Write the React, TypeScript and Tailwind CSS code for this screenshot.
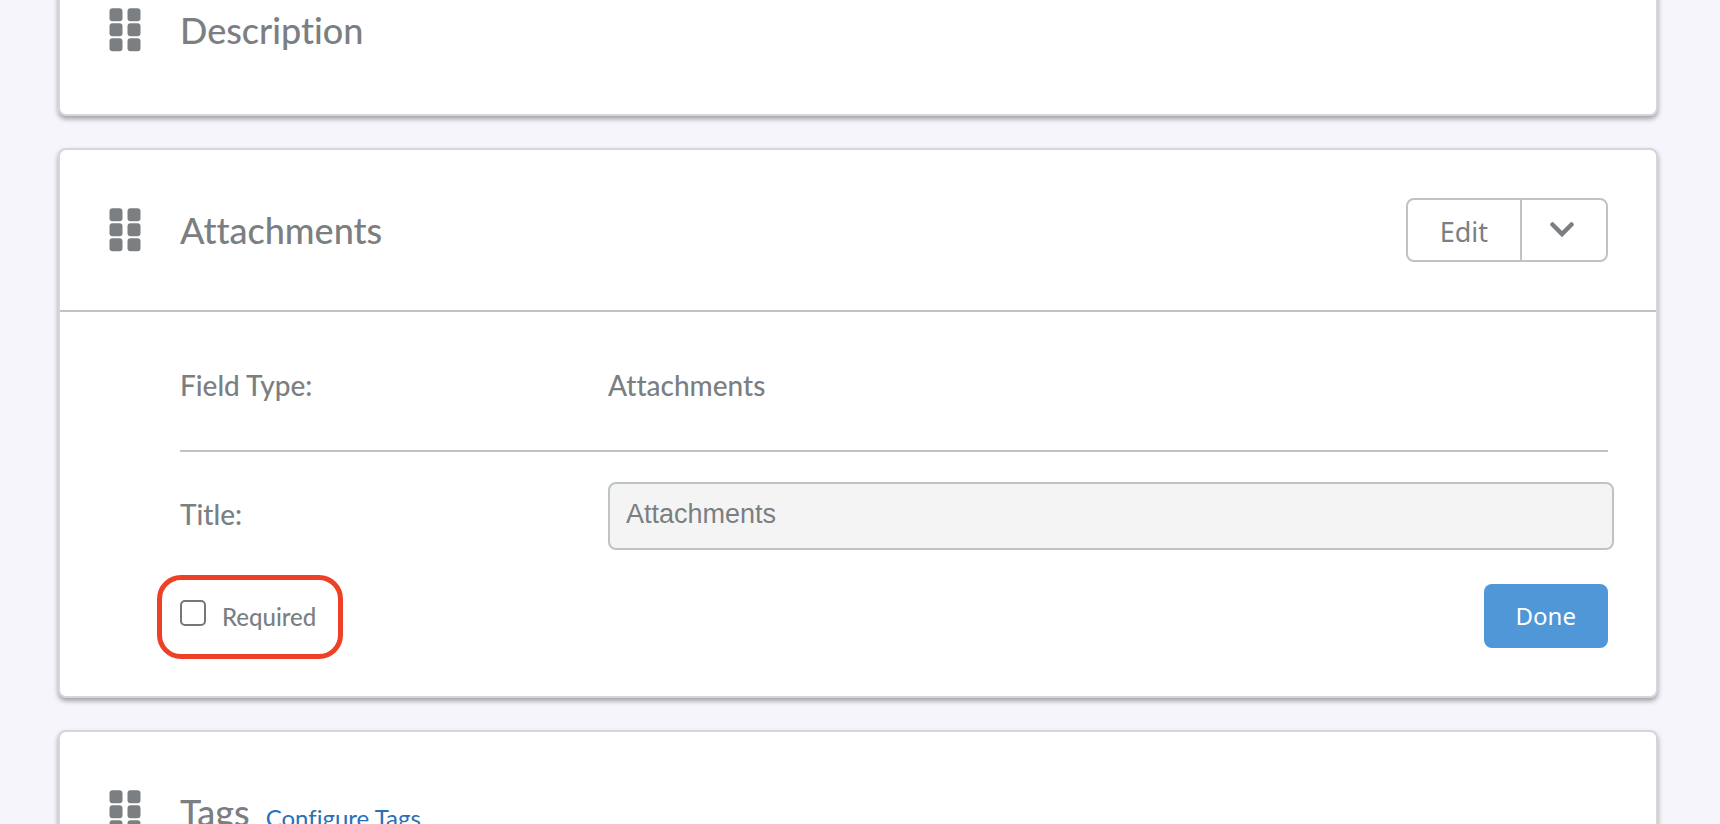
import React, { useState } from 'react';

interface FieldCardProps {
  title: string;
  link?: React.ReactNode;
  actions?: React.ReactNode;
  children?: React.ReactNode;
}

function DragHandle() {
  return (
    <svg viewBox="0 0 32 44" className="w-8 h-11 shrink-0 overflow-visible" fill="#7b7f82" aria-hidden="true">
      {[0, 15, 30].map((y) => (
        <React.Fragment key={y}>
          <rect x="1.5" y={y + 0.3} width="13" height="13" rx="3" />
          <rect x="19.5" y={y + 0.3} width="13" height="13" rx="3" />
        </React.Fragment>
      ))}
    </svg>
  );
}

function FieldCard({ title, link, actions, children }: FieldCardProps) {
  return (
    <section className="bg-white border-2 border-[#d3d7da] rounded-lg shadow-[0_3px_5px_rgba(0,0,0,0.35)]">
      <header className="flex items-center h-40 px-12">
        <DragHandle />
        <h2 className="ml-10 text-4xl font-medium">{title}</h2>
        {link}
        {actions && <div className="ml-auto">{actions}</div>}
      </header>
      {children}
    </section>
  );
}

function EditMenu() {
  return (
    <div className="flex h-16 border-2 border-[#bdc3c7] rounded-lg font-['Noto_Sans',sans-serif]">
      <button type="button" className="px-8 pt-1 text-[27px]">Edit</button>
      <button
        type="button"
        aria-label="More actions"
        className="flex items-center justify-center w-[86px] border-l-2 border-[#bdc3c7]"
      >
        <svg viewBox="0 0 24 16" className="w-6 h-4 mr-1" fill="none" stroke="#7b7f82" strokeWidth="4.5">
          <path d="M2.5 2.5L12 12L21.5 2.5" strokeLinecap="round" />
        </svg>
      </button>
    </div>
  );
}

export default function App() {
  const [title, setTitle] = useState('Attachments');
  const [required, setRequired] = useState(false);

  return (
    <div className="h-screen overflow-hidden bg-[#f6f5fb] text-[#7b7f82] font-[Lato,sans-serif] [font-variant-ligatures:none]">
      <main className="flex flex-col gap-8 -mt-[52px] pl-[58px] pr-[62px]">
        <FieldCard title="Description">
          <div className="h-1" />
        </FieldCard>

        <FieldCard title="Attachments" actions={<EditMenu />}>
          <div className="border-t-2 border-[#bdc3c7] pl-30 pr-12 pb-12 font-medium">
            <div className="flex items-center h-[140px] pb-2 pt-4 text-[28px] border-b-2 border-[#bdc3c7]">
              <div className="w-[428px]">Field Type:</div>
              <div>Attachments</div>
            </div>

            <div className="flex items-center pt-[30px] -mr-[6px] text-[28px]">
              <label htmlFor="field-title" className="w-[428px] pb-1">Title:</label>
              <input
                id="field-title"
                type="text"
                value={title}
                onChange={(e) => setTitle(e.target.value)}
                className="flex-1 h-[68px] px-4 pb-1 text-[27px] font-['Liberation_Sans',Arial,sans-serif] bg-[#f4f4f4] border-2 border-[#bdc3c7] rounded-lg"
              />
            </div>

            <div className="flex items-start justify-between pt-[34px]">
              <div className="-ml-[23px] -mt-[9px] -mb-3 flex items-center h-[84px] pl-[18px] pr-[22px] border-5 border-[#ee4026] rounded-3xl">
                <input
                  id="field-required"
                  type="checkbox"
                  checked={required}
                  onChange={(e) => setRequired(e.target.checked)}
                  className="appearance-none w-[26px] h-[26px] mb-2 bg-white checked:bg-[#4f97d6] border-2 border-[#767676] rounded-[5px]"
                />
                <label htmlFor="field-required" className="pl-4 text-2xl">Required</label>
              </div>
              <button
                type="button"
                className="h-16 px-8 bg-[#4f97d6] text-white text-2xl font-normal font-['Noto_Sans',sans-serif] rounded-lg"
              >
                Done
              </button>
            </div>
          </div>
        </FieldCard>

        <FieldCard
          title="Tags"
          link={<a href="#tags" className="ml-4 pt-3 text-2xl text-[#2a70b8]">Configure Tags</a>}
        />
      </main>
    </div>
  );
}
